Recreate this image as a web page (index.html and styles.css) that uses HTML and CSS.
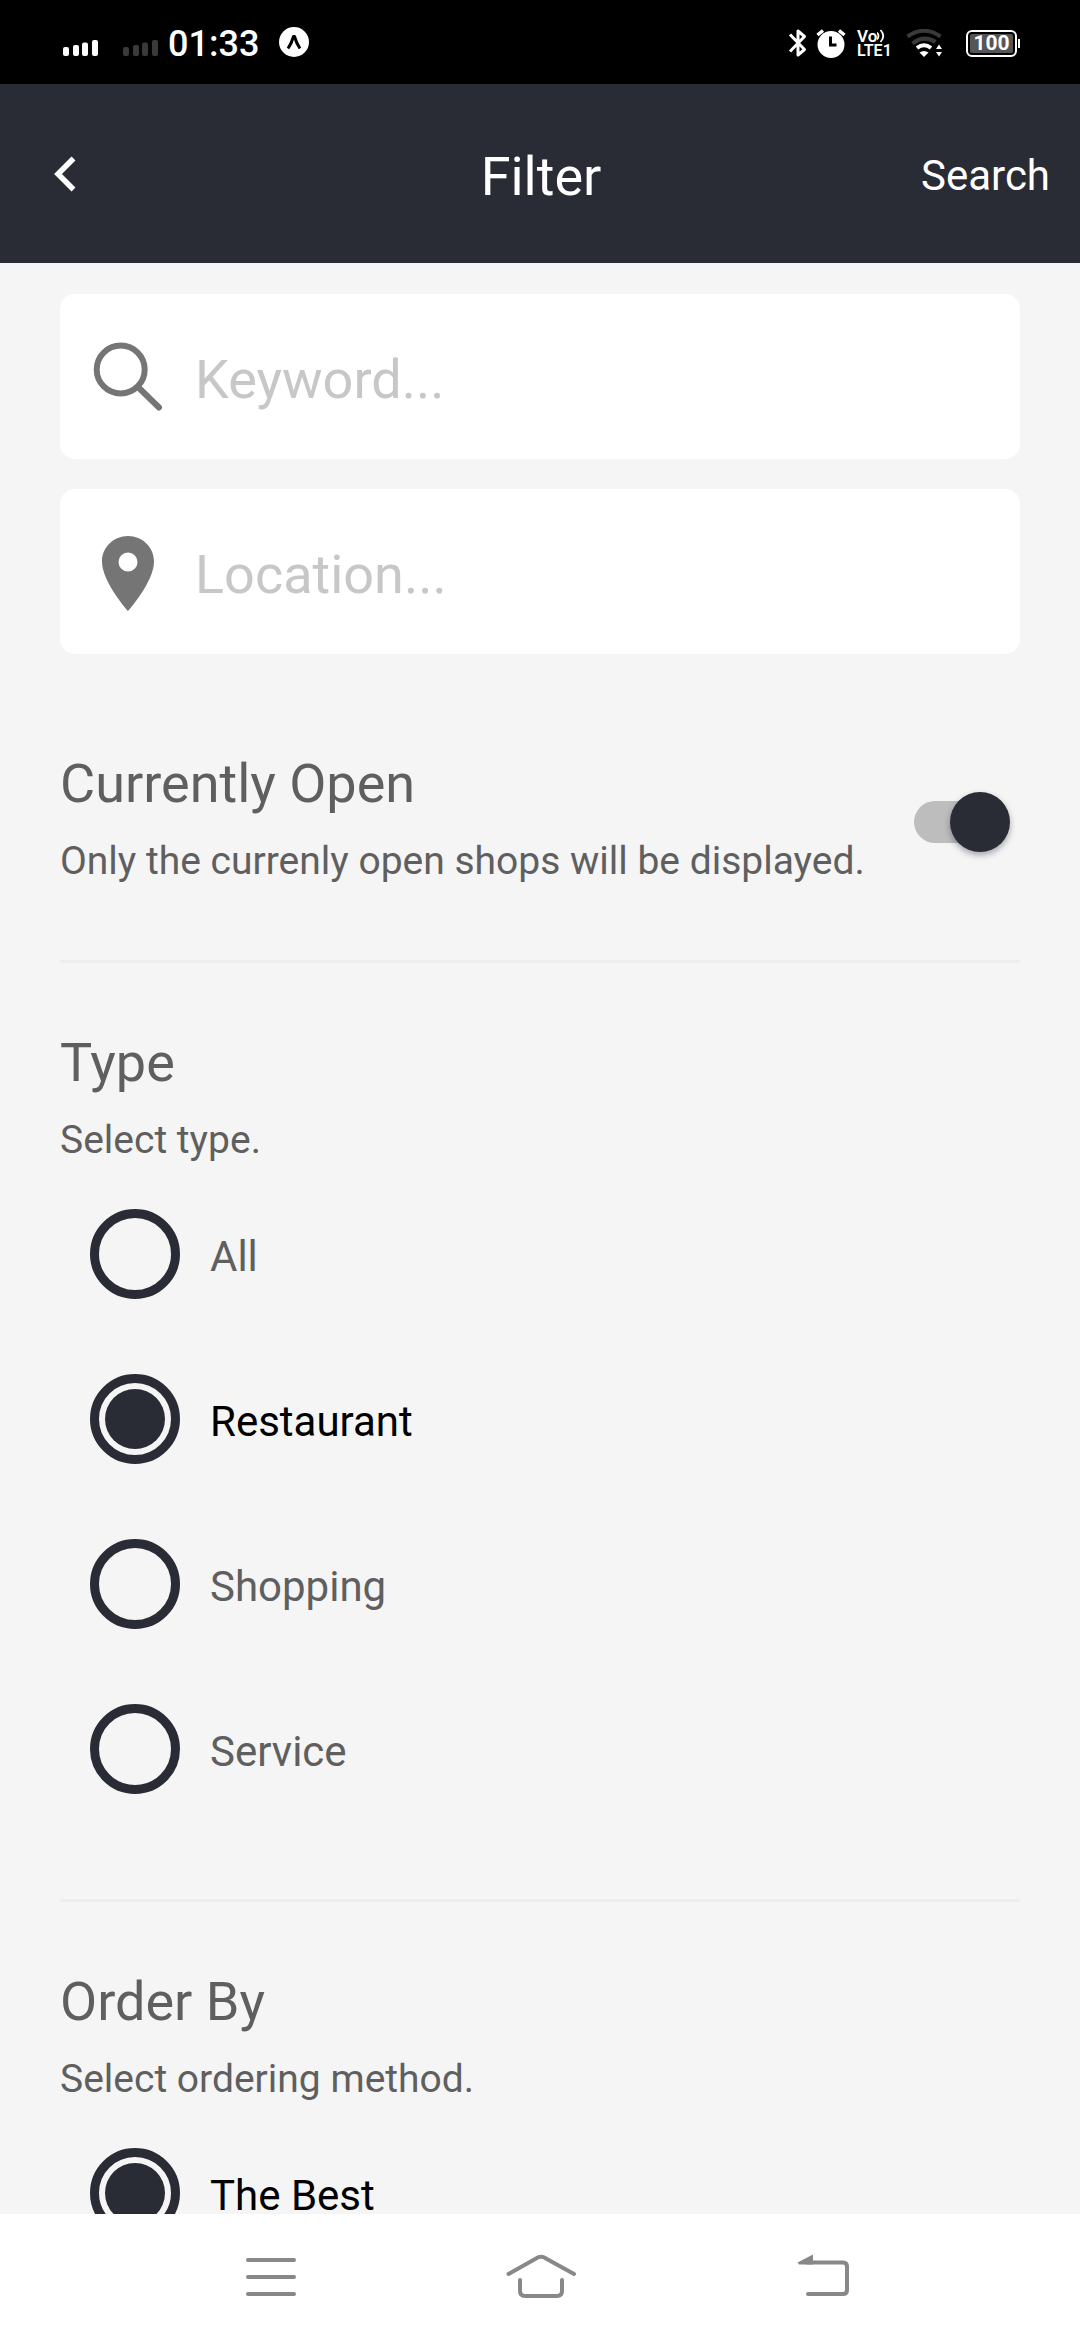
FILE: index.html
```html
<!DOCTYPE html>
<html lang="en">
<head>
<meta charset="utf-8">
<title>Filter</title>
<link rel="stylesheet" href="styles.css">
</head>
<body>
<div class="screen">
  <div class="status">
    <svg class="signals" width="96" height="20" viewBox="0 0 96 20">
      <g fill="#fff"><rect x="0" y="8" width="6" height="9" rx="2"/><rect x="10" y="6" width="6" height="11" rx="2"/><rect x="19" y="3.500" width="6" height="13.500" rx="2"/><rect x="29" y="1" width="6" height="16" rx="2"/></g>
      <g fill="#3a3a3a"><rect x="60" y="8" width="6" height="9" rx="2"/><rect x="70" y="6" width="6" height="11" rx="2"/><rect x="79" y="3.500" width="6" height="13.500" rx="2"/><rect x="89" y="1" width="6" height="16" rx="2"/></g>
    </svg>
    <span class="clock">01:33</span>
    <svg class="app" width="30" height="30" viewBox="0 0 30 30"><circle cx="15" cy="15" r="15" fill="#fff"/><path d="M9 21.500C11.500 18 13.500 13 14.500 9.500h1C16.500 13 18.500 18 21 21.500" fill="none" stroke="#000" stroke-width="3" stroke-linejoin="round"/></svg>
    <span class="spacer"></span>
    <svg class="bt" width="20" height="30" viewBox="0 0 20 30"><path d="M2 6.500 16.500 21.500 10 27V3l6.500 5.500L2 23.500" fill="none" stroke="#fff" stroke-width="3" stroke-linejoin="round"/></svg>
    <svg class="alarm" width="30" height="30" viewBox="0 0 30 30"><circle cx="15" cy="16.500" r="13.500" fill="#fff"/><path d="M1.500 7 7 2.500M28.500 7 23 2.500" stroke="#fff" stroke-width="3.500"/><path d="M14.500 8.500V17H20.500" fill="none" stroke="#000" stroke-width="3"/></svg>
    <div class="volte">
      <div class="vo">Vo<svg width="10" height="14" viewBox="0 0 10 14"><path d="M0 3.500Q3 7 0 10.500M3.500 1Q9 7 3.500 13" fill="none" stroke="#fff" stroke-width="1.800"/></svg></div>
      <div class="lte">LTE1</div>
    </div>
    <svg class="wifi" width="38" height="28" viewBox="0 0 38 28">
      <g fill="none" stroke="#3a3a3a" stroke-width="4"><path d="M1.500 7.500Q18 -4 34.500 7.500"/><path d="M6.500 14.500Q18 5.500 29.500 13"/></g>
      <path d="M11 19Q18 13.500 25 19" fill="none" stroke="#fff" stroke-width="4"/>
      <path d="M13.500 23.500Q18 20.500 22.500 23.500L18 28Z" fill="#fff"/>
      <path d="M30 20 33 15.500 36 20ZM30 23 33 27.500 36 23Z" fill="#fff"/>
    </svg>
    <div class="battery"><span class="level">100</span></div>
    <span class="tip"></span>
  </div>

  <header class="bar">
    <svg class="back" width="26" height="40" viewBox="0 0 26 40"><path d="M20.500 4.500 5 20 20.500 35.500" fill="none" stroke="#fff" stroke-width="5.500"/></svg>
    <h1 class="bar-title">Filter</h1>
    <span class="bar-action">Search</span>
  </header>

  <main class="content">
    <div class="field">
      <svg class="field-icon" width="78" height="78" viewBox="0 0 78 78"><circle cx="35.700" cy="31.500" r="24" fill="none" stroke="#757575" stroke-width="6"/><path d="M53 49 74 69.500" stroke="#757575" stroke-width="6" stroke-linecap="round"/></svg>
      <span class="placeholder">Keyword...</span>
    </div>
    <div class="field">
      <svg class="field-icon" width="78" height="78" viewBox="0 0 78 78"><path fill-rule="evenodd" fill="#757575" d="M43 3C28.600 3 17 14.200 17 28.500 17 49 43 78 43 78S69 49 69 28.500C69 14.200 57.400 3 43 3ZM43 19.500a9.500 9.500 0 1 1 0 19 9.500 9.500 0 0 1 0-19Z"/></svg>
      <span class="placeholder">Location...</span>
    </div>

    <section class="section open">
      <div>
        <h2 class="title">Currently Open</h2>
        <p class="sub">Only the currenly open shops will be displayed.</p>
      </div>
      <div class="switch"><span class="thumb"></span></div>
    </section>

    <section class="section">
      <h2 class="title">Type</h2>
      <p class="sub">Select type.</p>
      <ul class="options">
        <li class="option"><span class="radio"></span><span class="label">All</span></li>
        <li class="option selected"><span class="radio"></span><span class="label">Restaurant</span></li>
        <li class="option"><span class="radio"></span><span class="label">Shopping</span></li>
        <li class="option"><span class="radio"></span><span class="label">Service</span></li>
      </ul>
    </section>

    <section class="section">
      <h2 class="title">Order By</h2>
      <p class="sub">Select ordering method.</p>
      <ul class="options">
        <li class="option selected"><span class="radio"></span><span class="label">The Best</span></li>
      </ul>
    </section>
  </main>

  <nav class="nav">
    <svg width="80" height="60" viewBox="0 0 80 60"><path d="M17 13H63M17 30H63M17 47H63" stroke="#888" stroke-width="4" stroke-linecap="round"/></svg>
    <svg class="home" width="80" height="60" viewBox="0 0 80 60"><g fill="none" stroke="#888" stroke-width="4" stroke-linecap="round"><path d="M7.500 27 35 11.500Q40 8 45 11.500L73 27"/><path d="M19 33V44Q19 49 24 49H56Q61 49 61 44V33"/></g></svg>
    <svg class="return" width="80" height="60" viewBox="0 0 80 60"><path d="M22 15.500H58Q62 15.500 62 19.500V43Q62 47 58 47H23" fill="none" stroke="#888" stroke-width="4" stroke-linecap="round"/><path d="M14 17.500 12.500 15.500 28 7.500V17.500Z" fill="#888"/></svg>
  </nav>
</div>
</body>
</html>
```
FILE: styles.css
```css
* { box-sizing: border-box; }

body {
  margin: 0;
  font-family: Roboto, "Noto Sans", sans-serif;
  background: #f5f5f5;
}

h1, h2, p, ul { margin: 0; padding: 0; font-weight: 400; }
svg { display: block; flex: none; }

.screen {
  width: 1080px;
  height: 2340px;
  display: flex;
  flex-direction: column;
  overflow: hidden;
}

/* Status bar */
.status {
  flex: none;
  height: 84px;
  padding: 2px 60px 0 63px;
  display: flex;
  align-items: center;
  background: #000;
  color: #fff;
}
.signals { margin-top: 12px; }
.clock { margin-left: 9px; width: 89px; padding-top: 1px; font-size: 36px; line-height: 42px; font-weight: 500; white-space: nowrap; }
.app { margin-left: 22px; margin-bottom: 2px; }
.spacer { flex: 1; }
.bt { margin-right: 8px; }
.alarm { margin-right: 11px; }
.volte { width: 34px; margin-right: 15px; font-weight: 600; white-space: nowrap; }
.vo { display: flex; align-items: center; font-size: 17px; line-height: 14px; }
.lte { font-size: 16px; line-height: 15px; }
.wifi { margin-right: 22px; }
.battery {
  width: 51px;
  height: 27px;
  padding: 2px;
  border: 2px solid #fff;
  border-radius: 6px;
}
.level {
  display: block;
  height: 19px;
  background: #555;
  border-radius: 2px;
  font-size: 21px;
  line-height: 19px;
  font-weight: 700;
  text-align: center;
}
.tip { width: 2px; height: 9px; margin-left: 1px; background: #fff; }

/* App bar */
.bar {
  flex: none;
  height: 179px;
  padding: 0 30px 0 53px;
  display: grid;
  grid-template-columns: 1fr auto 1fr;
  align-items: center;
  background: #292c35;
  color: #fff;
}
.bar-title { font-size: 54px; line-height: 72px; padding-top: 6px; margin-left: -21px; }
.bar-action { font-size: 42px; line-height: 56px; justify-self: end; padding-top: 5px; }

/* Form */
.content {
  flex: 1;
  min-height: 0;
  overflow: hidden;
  padding: 31px 60px 0;
  background: #f5f5f5;
  color: #5f5f5f;
}
.field {
  height: 165px;
  margin-bottom: 30px;
  padding-left: 25px;
  display: flex;
  align-items: center;
  background: #fff;
  border-radius: 15px;
}
.placeholder { margin-left: 32px; padding-top: 7px; font-size: 54px; line-height: 64px; color: #c7c7c7; }

.section { padding-top: 64px; }
.section + .section { border-top: 3px solid #eee; }
.title { font-size: 54px; line-height: 72px; }
.sub { margin-top: 15px; font-size: 39px; line-height: 52px; white-space: nowrap; }

.open {
  display: flex;
  justify-content: space-between;
  padding-bottom: 73px;
}
.switch {
  width: 88px;
  height: 42px;
  margin: 53px 18px 0 0;
  border-radius: 21px;
  background: #bdbdbd;
  display: flex;
  align-items: center;
  justify-content: flex-end;
}
.thumb {
  flex: none;
  width: 60px;
  height: 60px;
  margin-right: -8px;
  border-radius: 50%;
  background: #292c35;
  box-shadow: 0 3px 6px rgba(40, 40, 70, .4);
}

.options {
  list-style: none;
  padding: 43px 30px 105px;
  display: flex;
  flex-direction: column;
  gap: 75px;
}
.option { height: 90px; display: flex; align-items: center; gap: 30px; font-size: 42px; line-height: 56px; }
.label { padding-top: 5px; }
.selected { color: #000; }
.radio {
  flex: none;
  width: 90px;
  height: 90px;
  border: 9px solid #292c35;
  border-radius: 50%;
}
.selected .radio { padding: 6px; }
.selected .radio::before {
  content: "";
  display: block;
  height: 60px;
  border-radius: 50%;
  background: #292c35;
}

/* System navigation */
.nav {
  flex: none;
  height: 126px;
  padding-left: 231px;
  display: flex;
  align-items: center;
  background: #fff;
}
.home { margin-left: 190px; }
.return { margin-left: 204px; }
```
